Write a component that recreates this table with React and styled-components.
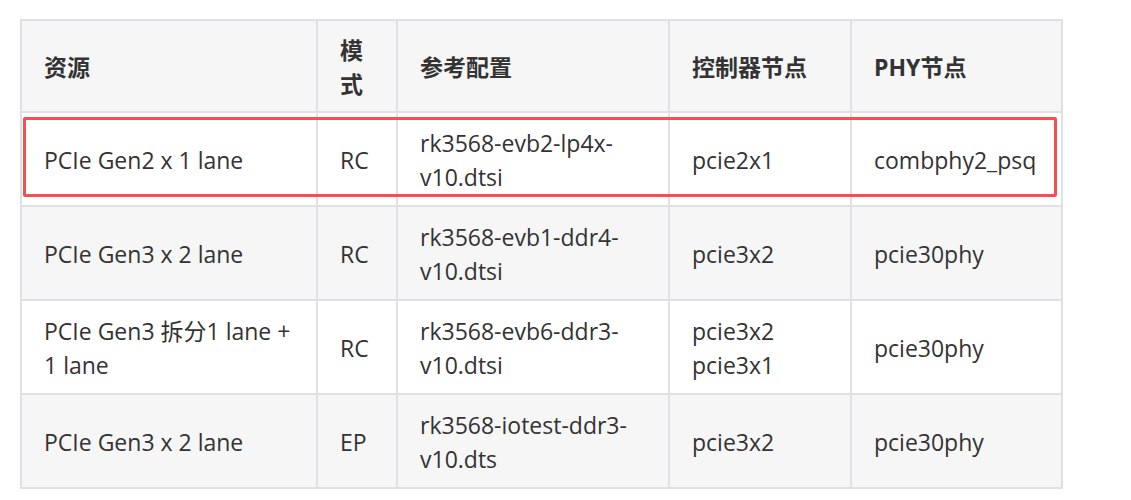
import React from 'react';
import styled, { createGlobalStyle } from 'styled-components';

const GlobalStyle = createGlobalStyle`
  body {
    margin: 0;
    background: #fff;
    font-family: "Open Sans", "Noto Sans CJK SC", sans-serif;
    color: #333;
  }
`;

const columns = [296, 80, 272, 182, 211];

const headers = ['资源', '模式', '参考配置', '控制器节点', 'PHY节点'];

const rows = [
  ['PCIe Gen2 x 1 lane', 'RC', 'rk3568-evb2-lp4x-v10.dtsi', ['pcie2x1'], 'combphy2_psq'],
  ['PCIe Gen3 x 2 lane', 'RC', 'rk3568-evb1-ddr4-v10.dtsi', ['pcie3x2'], 'pcie30phy'],
  ['PCIe Gen3 拆分1 lane + 1 lane', 'RC', 'rk3568-evb6-ddr3-v10.dtsi', ['pcie3x2', 'pcie3x1'], 'pcie30phy'],
  ['PCIe Gen3 x 2 lane', 'EP', 'rk3568-iotest-ddr3-v10.dts', ['pcie3x2'], 'pcie30phy'],
];

export default function App() {
  return (
    <Page>
      <GlobalStyle />
      <Frame>
        <Table>
          <colgroup>
            {columns.map((w, i) => <col key={i} style={{ width: w }} />)}
          </colgroup>
          <thead>
            <tr>
              {headers.map((h) => <Th key={h}>{h}</Th>)}
            </tr>
          </thead>
          <tbody>
            {rows.map((r, i) => (
              <Row key={i} $striped={i % 2 === 1}>
                <Td>{r[0]}</Td>
                <Td>{r[1]}</Td>
                <Td>{r[2]}</Td>
                <Td>
                  {r[3].map((n, j) => (
                    <React.Fragment key={n}>
                      {j > 0 && <br />}
                      {n}
                    </React.Fragment>
                  ))}
                </Td>
                <Td>{r[4]}</Td>
              </Row>
            ))}
          </tbody>
        </Table>
        <Highlight />
      </Frame>
    </Page>
  );
}

const Page = styled.div`
  padding: 19px 0 0 20px;
`;

const Frame = styled.div`
  position: relative;
  display: inline-block;
`;

const Table = styled.table`
  border-collapse: collapse;
  table-layout: fixed;
  width: 1043px;
  font-size: 23px;
  line-height: 34px;
`;

const Th = styled.th`
  border: 2px solid #dfe2e5;
  background: #f6f6f6;
  padding: 12px 22px 10px;
  text-align: left;
  font-weight: 700;
  color: #333;
`;

const Row = styled.tr`
  background: ${(p) => (p.$striped ? '#f6f6f6' : '#fff')};
`;

const Td = styled.td`
  border: 2px solid #dfe2e5;
  padding: 13px 22px 11px;
  vertical-align: middle;
  color: #333;
`;

const Highlight = styled.div`
  position: absolute;
  left: 3px;
  top: 98px;
  width: 1034px;
  height: 80px;
  box-sizing: border-box;
  border: 3px solid #f5504f;
  border-radius: 2px;
  pointer-events: none;
`;
